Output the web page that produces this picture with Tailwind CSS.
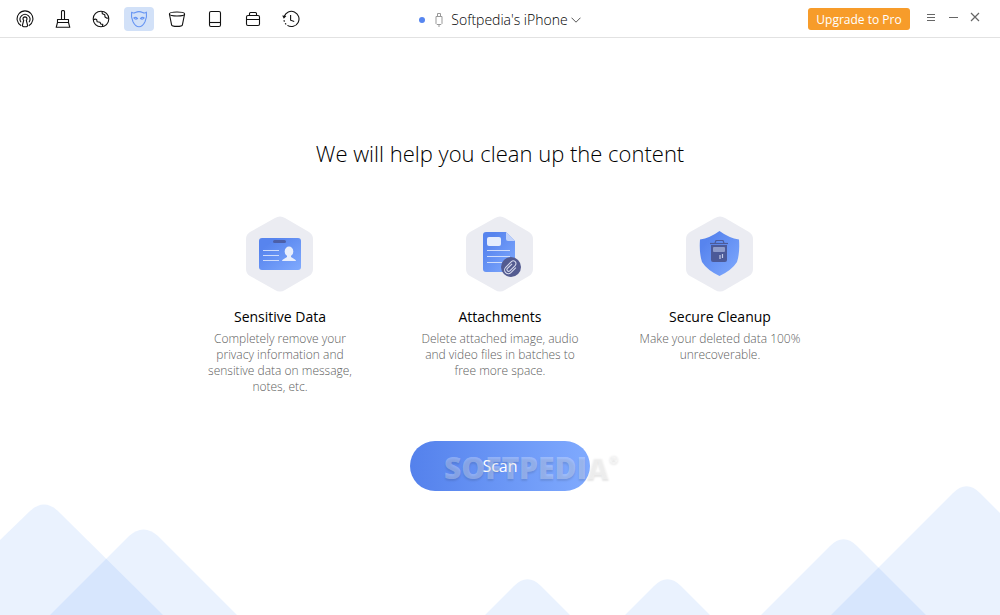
<!DOCTYPE html>
<html lang="en">
<head>
    <meta charset="UTF-8">
    <meta name="viewport" content="width=device-width, initial-scale=1.0">
    <title>Clean up - Softpedia's iPhone</title>
    <script src="https://cdn.jsdelivr.net/npm/@tailwindcss/browser@4"></script>
</head>
<body class="min-h-screen flex flex-col bg-white text-black font-['Open_Sans','Noto_Sans',sans-serif]">

<!-- Top bar -->
<header class="grid grid-cols-[1fr_auto_1fr] items-center h-[38px] border-b border-[#e2e2e2]">

    <!-- Tools -->
    <nav class="flex items-center gap-2 pl-[10px]">
        <button aria-label="AirDrop" class="w-[30px] h-6 flex items-center justify-center rounded">
            <svg class="w-[18px] h-[18px]" viewBox="0 0 18 18" fill="none" stroke="#111" stroke-width="1.1">
                <path d="M5.200 15.700A7.900 7.900 0 1 1 12.800 15.700"/>
                <path d="M5 12.200A4.900 4.900 0 1 1 13 12.200"/>
                <path d="M7.700 10.400A2 2 0 1 1 10.300 10.400L11.600 15.300Q11.700 16.800 9 16.800T6.400 15.300Z"/>
            </svg>
        </button>
        <button aria-label="Cleaner" class="w-[30px] h-6 flex items-center justify-center rounded">
            <svg class="w-[18px] h-[18px]" viewBox="0 0 18 18" fill="none" stroke="#111" stroke-width="1.1" stroke-linejoin="round">
                <path d="M7.500 9.500V1.500Q7.500 .5 9 .5T10.500 1.500V9.500"/>
                <path d="M3.500 9.500H14.500V12.500H3.500ZM3.500 12.500L2.200 17.300H15.800L14.500 12.500"/>
            </svg>
        </button>
        <button aria-label="Internet" class="w-[30px] h-6 flex items-center justify-center rounded">
            <svg class="w-[18px] h-[18px]" viewBox="0 0 18 18" fill="none" stroke="#111" stroke-width="1.1" stroke-linejoin="round">
                <circle cx="9" cy="9" r="7.800"/>
                <path d="M10 1.500L10.400 3.800L12.800 4.800L13 7L15 8.200L16.600 8M1.300 9.800Q3 8.600 4.600 9.400L5.200 11.800L8 12.200L8.800 14L10.800 14.400L10.400 16.600"/>
            </svg>
        </button>
        <button aria-label="Privacy" class="w-[30px] h-6 flex items-center justify-center rounded bg-[#d2e1f8]">
            <svg class="w-[18px] h-[18px]" viewBox="0 0 18 18" fill="none" stroke="#6795f3" stroke-width="1.100" stroke-linejoin="round">
                <path d="M1.600 2.200Q3.200 3.600 5.400 2.400Q9 .8 12.600 2.400Q14.800 3.600 16.400 2.200Q17.200 6.600 15 11.800Q12.600 16.800 9 16.800T3 11.800Q.8 6.600 1.600 2.200Z"/>
                <path d="M3.800 8Q5.600 6.400 7.600 8.600Q5.400 10 3.800 8ZM14.200 8Q12.400 6.400 10.400 8.600Q12.600 10 14.200 8Z"/>
            </svg>
        </button>
        <button aria-label="Uninstall" class="w-[30px] h-6 flex items-center justify-center rounded">
            <svg class="w-[18px] h-[18px]" viewBox="0 0 18 18" fill="none" stroke="#111" stroke-width="1.100">
                <ellipse cx="9" cy="4" rx="7.600" ry="2"/>
                <path d="M1.400 4L3.600 14.800Q3.900 16.400 9 16.400T14.400 14.800L16.600 4"/>
            </svg>
        </button>
        <button aria-label="Device" class="w-[30px] h-6 flex items-center justify-center rounded">
            <svg class="w-[18px] h-[18px]" viewBox="0 0 18 18" fill="none" stroke="#111" stroke-width="1.100">
                <rect x="3.500" y="1.500" width="11" height="15" rx="1.500"/>
                <path d="M3.500 12.500H14.500"/>
            </svg>
        </button>
        <button aria-label="Toolbox" class="w-[30px] h-6 flex items-center justify-center rounded">
            <svg class="w-[18px] h-[18px]" viewBox="0 0 18 18" fill="none" stroke="#111" stroke-width="1.100">
                <rect x="2.500" y="5.500" width="13" height="10" rx="1.500"/>
                <path d="M2.500 9.500H15.500M5.500 5.500V3.500Q5.500 2.500 6.500 2.500H11.500Q12.500 2.500 12.500 3.500V5.500"/>
            </svg>
        </button>
        <button aria-label="History" class="w-[30px] h-6 flex items-center justify-center rounded">
            <svg class="w-[18px] h-[18px]" viewBox="0 0 18 18" fill="none" stroke="#111" stroke-width="1.100">
                <path d="M2.200 6.500A7.600 7.600 0 1 1 5.400 15.400"/>
                <path d="M2 10.200A7.600 7.600 0 0 0 5.400 15.400" stroke-dasharray="1.600 1.600"/>
                <path d="M8.600 5V10.200L12.200 11.400"/>
                <path d="M.2 5.500L4.400 6L1.800 8.800Z" fill="#111" stroke="none"/>
            </svg>
        </button>
    </nav>

    <!-- Connected device -->
    <button class="flex items-center pt-[2px] text-sm leading-5 font-light">
        <span class="w-[6px] h-[6px] rounded-full bg-[#5686f0] mr-[10px]"></span>
        <svg class="w-2 h-[14px] mr-2" viewBox="0 0 8 14" fill="none" stroke="#999" stroke-width="1">
            <path d="M2.500 3V.5H5.500V3M1 3.500H7V10.500L6 11.500H2L1 10.500ZM4 11.500V14"/>
        </svg>
        Softpedia's iPhone
        <svg class="w-[10px] h-[6px] ml-[3px]" viewBox="0 0 10 6" fill="none" stroke="#555" stroke-width="1">
            <path d="M.5 .7L5 5.200L9.500 .7"/>
        </svg>
    </button>

    <!-- Window controls -->
    <div class="flex items-center justify-end pr-5">
        <button class="w-[102px] h-[22px] rounded-[3px] bg-[#f79c2a] text-white text-xs leading-6">Upgrade to Pro</button>
        <button aria-label="Menu" class="ml-4 pb-1">
            <svg class="w-[10px] h-[10px]" viewBox="0 0 10 10" stroke="#666" stroke-width="1">
                <path d="M1 2.500H9M1 5.500H9M1 8.500H9"/>
            </svg>
        </button>
        <button aria-label="Minimize" class="ml-3 pb-1">
            <svg class="w-[10px] h-[10px]" viewBox="0 0 10 10" stroke="#666" stroke-width="1">
                <path d="M1 5.500H10"/>
            </svg>
        </button>
        <button aria-label="Close" class="ml-3 pb-1">
            <svg class="w-[10px] h-[10px]" viewBox="0 0 10 10" stroke="#666" stroke-width="1.200">
                <path d="M1 1L9 9M9 1L1 9"/>
            </svg>
        </button>
    </div>
</header>

<!-- Content -->
<main class="relative flex-1 flex flex-col items-center overflow-hidden pt-[99px] pb-[124px]">

    <!-- Background hills -->
    <svg class="absolute left-0 bottom-0 w-[240px] h-[130px]" viewBox="0 0 240 130" fill="#5093f7" fill-opacity=".12">
        <path d="M0 130V55L30 26Q44 13 58 26L163 130Z"/>
        <path d="M50 130L129 51Q143.500 38 158 51L237 130Z"/>
    </svg>
    <svg class="absolute left-1/2 bottom-0 w-[230px] h-[40px] -ml-4" viewBox="0 0 230 40" fill="#5093f7" fill-opacity=".12">
        <path d="M1 40L29.500 11.500Q43.500 -3 57.500 11.500L86 40Z"/>
        <path d="M141 40L169.500 11.500Q183.500 -3 197.500 11.500L226 40Z"/>
    </svg>
    <svg class="absolute right-0 bottom-0 w-[240px] h-[130px]" viewBox="0 0 240 130" fill="#5093f7" fill-opacity=".12">
        <path d="M1 130L69.500 61.500Q83.500 47 97.500 61.500L166 130Z"/>
        <path d="M71 130L192.500 8.500Q206.500 -6 220.500 8.500L240 28V130Z"/>
    </svg>

    <h1 class="text-[22px] leading-8 font-light">We will help you clean up the content</h1>

    <div class="grid grid-cols-[160px_160px_160px] gap-x-[60px] mt-[47px] text-center whitespace-nowrap">

        <section class="flex flex-col items-center">
            <svg class="w-[68px] h-[76px]" viewBox="0 0 68 76">
                <defs>
                    <linearGradient id="blue" x1="0" y1="0" x2="1" y2="1">
                        <stop offset=".2" stop-color="#5784ee"/>
                        <stop offset="1" stop-color="#80aafe"/>
                    </linearGradient>
                </defs>
                <path d="M29 2Q34 -1 39 2L63 16Q67 18.500 67 23V53Q67 57.500 63 60L39 74Q34 77 29 74L4 60Q0 57.500 0 53V23Q0 18.500 4 16Z" fill="#ebecf2"/>
                <rect x="13" y="22" width="42" height="32" rx="3" fill="url(#blue)"/>
                <rect x="27" y="24" width="13" height="3" rx="1.500" fill="#4c5fa8"/>
                <path d="M17 34.500H33M17 39.500H33M17 44.500H33" stroke="#cfdcfb" stroke-width="1"/>
                <ellipse cx="43" cy="35.500" rx="4.300" ry="5" fill="#e8eefc"/>
                <path d="M41 38H45V41L49 43.500Q50 44 50 45H36Q36 44 37 43.500L41 41Z" fill="#e8eefc"/>
            </svg>
            <h2 class="mt-[14px] text-sm leading-[22px]">Sensitive Data</h2>
            <p class="mt-[3px] text-xs leading-4 font-light text-[#606060]">Completely remove your<br>privacy information and<br>sensitive data on message,<br>notes, etc.</p>
        </section>

        <section class="flex flex-col items-center">
            <svg class="w-[68px] h-[76px]" viewBox="0 0 68 76">
                <path d="M29 2Q34 -1 39 2L63 16Q67 18.500 67 23V53Q67 57.500 63 60L39 74Q34 77 29 74L4 60Q0 57.500 0 53V23Q0 18.500 4 16Z" fill="#ebecf2"/>
                <path d="M20 16H40L49 25V56H20Q17 56 17 53V19Q17 16 20 16Z" fill="url(#blue)"/>
                <path d="M40 16L49 25H42Q40 25 40 23Z" fill="#c0d2fb"/>
                <rect x="21" y="21" width="14" height="9" rx="2" fill="#e4ecfd"/>
                <path d="M21 34.500H44M21 40.500H44M21 46.500H36" stroke="#cfdcfb" stroke-width="1"/>
                <circle cx="45" cy="51" r="10" fill="#535b90"/>
                <g transform="rotate(45 45 51)" fill="none" stroke="#d5d9ec" stroke-width="1.100">
                    <path d="M43.500 48V54.500A1.700 1.700 0 0 0 46.900 54.500V47A2.700 2.700 0 0 0 41.500 47V55A3.700 3.700 0 0 0 48.900 55V48"/>
                </g>
            </svg>
            <h2 class="mt-[14px] text-sm leading-[22px]">Attachments</h2>
            <p class="mt-[3px] text-xs leading-4 font-light text-[#606060]">Delete attached image, audio<br>and video files in batches to<br>free more space.</p>
        </section>

        <section class="flex flex-col items-center">
            <svg class="w-[68px] h-[76px]" viewBox="0 0 68 76">
                <path d="M29 2Q34 -1 39 2L63 16Q67 18.500 67 23V53Q67 57.500 63 60L39 74Q34 77 29 74L4 60Q0 57.500 0 53V23Q0 18.500 4 16Z" fill="#ebecf2"/>
                <path d="M33.500 15Q43 22 53 23.500Q54 37 51 46Q46 54 33.500 60Q21 54 16 46Q13 37 14 23.500Q24 22 33.500 15Z" fill="url(#blue)"/>
                <path d="M29 27L30 24.500H37L38 27" fill="none" stroke="#4c5a98" stroke-width="1.200"/>
                <path d="M24 27.500H42" stroke="#4c5a98" stroke-width="1.200"/>
                <path d="M25 29H41V44Q41 46 39 46H27Q25 46 25 44Z" fill="#4c5a98"/>
                <rect x="27" y="31" width="12" height="5" rx="1" fill="#8f9cca"/>
                <path d="M34 39V43M36.500 38V42" stroke="#c3cbe8" stroke-width="1.200"/>
            </svg>
            <h2 class="mt-[14px] text-sm leading-[22px]">Secure Cleanup</h2>
            <p class="mt-[3px] text-xs leading-4 font-light text-[#606060]">Make your deleted data 100%<br>unrecoverable.</p>
        </section>
    </div>

    <!-- Scan -->
    <div class="relative mt-[46px]">
        <button class="w-[180px] h-[50px] rounded-full bg-linear-to-r from-[#5481ec] to-[#80aafe] text-white text-base">Scan</button>
        <div class="absolute left-[34px] top-[6px] flex items-start text-[30px] leading-[42px] font-extrabold text-white/30 text-shadow-[0_2px_2px_rgb(0_0_0/0.1)] pointer-events-none">SOFTPEDIA<span class="text-xs leading-6">®</span></div>
    </div>
</main>

</body>
</html>
